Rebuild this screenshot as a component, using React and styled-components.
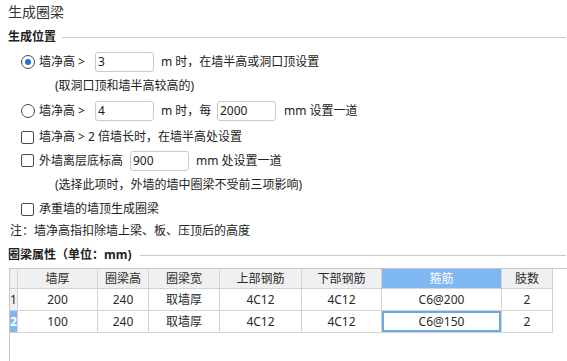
import React from "react";
import styled, { createGlobalStyle } from "styled-components";

const Global = createGlobalStyle`
  html, body { margin: 0; padding: 0; background: #fff; }
  body {
    font-family: "Noto Sans", "Noto Sans CJK SC", sans-serif;
    font-size: 12px;
    color: #222;
    overflow: hidden;
  }
`;

const Page = styled.div`
  width: 567px;
  height: 361px;
  display: flex;
  flex-direction: column;
  box-sizing: border-box;
`;

const Row = styled.div`
  height: ${(p) => p.$h}px;
  display: flex;
  align-items: center;
  padding-left: ${(p) => p.$pl}px;
  line-height: 16px;
  white-space: nowrap;
  flex: none;
`;

const Title = styled(Row)`
  font-size: 14px;
  color: #333;
`;

const SectionHead = styled(Row)`
  font-weight: bold;
  padding-right: 1px;
  &::after {
    content: "";
    flex: 1;
    height: 1px;
    background: #c9c9c9;
    margin-left: ${(p) => p.$gap}px;
  }
`;

const Radio = styled.span`
  width: 14px;
  height: 14px;
  box-sizing: border-box;
  border: 1px solid #4a4a4a;
  border-radius: 50%;
  display: inline-flex;
  align-items: center;
  justify-content: center;
  margin-right: 4px;
  flex: none;
  &::after {
    content: "";
    width: 6px;
    height: 6px;
    border-radius: 50%;
    background: ${(p) => (p.$on ? "#1d6fe0" : "transparent")};
  }
`;

const Check = styled.span`
  width: 13px;
  height: 13px;
  box-sizing: border-box;
  border: 1px solid #4a4a4a;
  border-radius: 2px;
  margin-right: 5px;
  flex: none;
`;

const Text = styled.span`
  display: inline-block;
  width: ${(p) => (p.$w ? `${p.$w}px` : "auto")};
  margin-left: ${(p) => p.$ml || 0}px;
  flex: none;
`;

const Input = styled.div`
  width: 59px;
  height: 20px;
  box-sizing: border-box;
  border: 1px solid #c9c9c9;
  border-radius: 3px;
  padding: 0 2px;
  display: flex;
  align-items: center;
  color: #222;
  flex: none;
`;

const TableArea = styled.div`
  flex: 1;
  margin-left: 9px;
  border-top: 1px solid #c6c6c6;
  border-left: 1px solid #c6c6c6;
`;

const Grid = styled.div`
  display: grid;
  grid-template-columns: 8px 80px 51px 71px 82px 80px 120px 51px;
  grid-template-rows: 20px 22px 22px;
`;

const Cell = styled.div`
  box-sizing: border-box;
  border-right: 1px solid #d3d3d3;
  border-bottom: 1px solid #d3d3d3;
  display: flex;
  align-items: center;
  justify-content: ${(p) => (p.$left ? "flex-start" : "center")};
  color: ${(p) => (p.$active ? "#fff" : "#2a2a2a")};
  background: ${(p) => (p.$active ? "#7eb7f2" : p.$head ? "#f0f0f0" : "#fff")};
  box-shadow: ${(p) => (p.$selected ? "inset 0 0 0 2px #6ea7e6" : "none")};
  font-weight: ${(p) => (p.$bold ? "bold" : "normal")};
  line-height: 14px;
  white-space: nowrap;
  overflow: hidden;
`;

const headers = ["墙厚", "圈梁高", "圈梁宽", "上部钢筋", "下部钢筋", "箍筋", "肢数"];
const rows = [
  ["200", "240", "取墙厚", "4C12", "4C12", "C6@200", "2"],
  ["100", "240", "取墙厚", "4C12", "4C12", "C6@150", "2"],
];

export default function App() {
  return (
    <Page>
      <Global />
      <Title $h={24} $pl={8}>生成圈梁</Title>
      <SectionHead $h={26} $pl={8} $gap={6}>生成位置</SectionHead>

      <Row $h={24} $pl={21}>
        <Radio $on />
        <Text $w={56}>墙净高 &gt;</Text>
        <Input>3</Input>
        <Text $ml={7}>m 时，在墙半高或洞口顶设置</Text>
      </Row>
      <Row $h={24} $pl={55}>(取洞口顶和墙半高较高的)</Row>

      <Row $h={26} $pl={21}>
        <Radio />
        <Text $w={56}>墙净高 &gt;</Text>
        <Input>4</Input>
        <Text $ml={7} $w={56}>m 时，每</Text>
        <Input>2000</Input>
        <Text $ml={8}>mm 设置一道</Text>
      </Row>

      <Row $h={26} $pl={21}>
        <Check />
        <Text>墙净高 &gt; 2 倍墙长时，在墙半高处设置</Text>
      </Row>
      <Row $h={21} $pl={21}>
        <Check />
        <Text $w={91}>外墙离层底标高</Text>
        <Input>900</Input>
        <Text $ml={7}>mm 处设置一道</Text>
      </Row>
      <Row $h={27} $pl={55}>(选择此项时，外墙的墙中圈梁不受前三项影响)</Row>
      <Row $h={22} $pl={21}>
        <Check />
        <Text>承重墙的墙顶生成圈梁</Text>
      </Row>
      <Row $h={22} $pl={10}>注：墙净高指扣除墙上梁、板、压顶后的高度</Row>

      <SectionHead $h={26} $pl={8} $gap={9}>圈梁属性（单位：mm)</SectionHead>

      <TableArea>
        <Grid>
          <Cell $head />
          {headers.map((h, i) => (
            <Cell key={h} $head $active={i === 5}>
              {h}
            </Cell>
          ))}
          {rows.map((r, ri) => (
            <React.Fragment key={ri}>
              <Cell $head $left $active={ri === 1} $bold={ri === 1}>
                {ri + 1}
              </Cell>
              {r.map((v, ci) => (
                <Cell key={ci} $selected={ri === 1 && ci === 5}>
                  {v}
                </Cell>
              ))}
            </React.Fragment>
          ))}
        </Grid>
      </TableArea>
    </Page>
  );
}
